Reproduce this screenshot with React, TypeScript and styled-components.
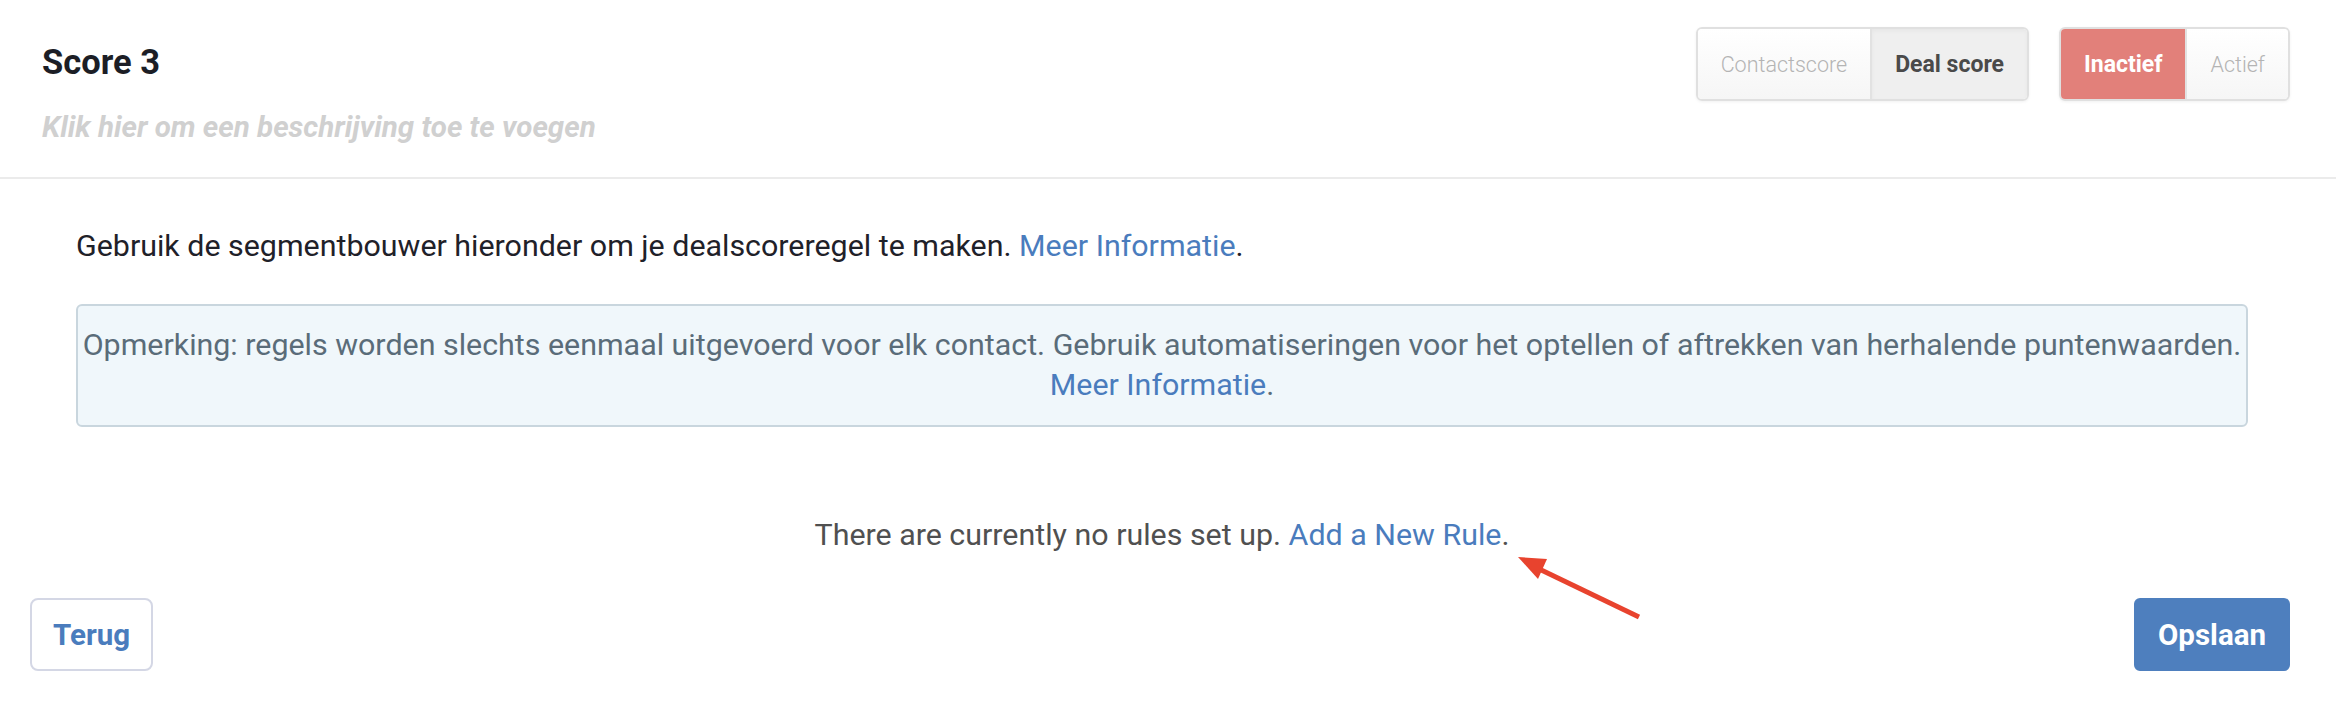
import React from "react";
import styled, { createGlobalStyle } from "styled-components";

const GlobalStyle = createGlobalStyle`
  html, body { margin: 0; padding: 0; background: #ffffff; }
  body {
    font-family: Roboto, "Noto Sans", "Liberation Sans", sans-serif;
    -webkit-font-smoothing: antialiased;
  }
  * { box-sizing: border-box; }
`;

const Page = styled.div`
  position: relative;
  width: 2336px;
  height: 720px;
  overflow: hidden;
  background: #ffffff;
`;

const Header = styled.header`
  display: flex;
  justify-content: space-between;
  align-items: flex-start;
  padding: 27px 46px 32px 42px;
  border-bottom: 2px solid #ebebeb;
`;

const TitleBlock = styled.div`
  display: flex;
  flex-direction: column;
  padding-top: 15px;
`;

const Title = styled.h1`
  margin: 0;
  font-size: 34.5px;
  line-height: 40px;
  font-weight: 700;
  color: #1c1e26;
`;

const Subtitle = styled.div`
  margin-top: 27px;
  font-size: 29.5px;
  line-height: 36px;
  font-weight: 700;
  font-style: italic;
  color: #d0d0d0;
`;

const Controls = styled.div`
  display: flex;
  gap: 30px;
`;

const ToggleGroup = styled.div`
  display: flex;
  height: 74px;
  border: 2px solid #e0e0e0;
  border-radius: 6px;
  overflow: hidden;
  box-shadow: 0 1px 3px rgba(0, 0, 0, 0.06);
`;

const ToggleButton = styled.button<{ $active?: boolean; $danger?: boolean }>`
  display: flex;
  align-items: center;
  justify-content: center;
  padding: 0 23px;
  border: none;
  border-left: 2px solid #e2e2e2;
  font-family: inherit;
  font-size: ${(p) => (p.$active ? "23px" : "21.5px")};
  font-weight: ${(p) => (p.$active ? 700 : 300)};
  color: ${(p) => (p.$active ? (p.$danger ? "#ffffff" : "#4a4a4a") : "#b4b4b4")};
  background: ${(p) =>
    p.$active
      ? p.$danger
        ? "#e2807a"
        : "#efefef"
      : "linear-gradient(#ffffff, #f6f6f6)"};
  box-shadow: ${(p) => (p.$active && !p.$danger ? "inset 0 2px 4px rgba(0,0,0,0.04)" : "none")};
  &:first-child { border-left: none; }
`;

const Content = styled.main`
  padding: 47px 88px 0 76px;
`;

const Intro = styled.p`
  margin: 0;
  font-size: 30.4px;
  line-height: 40px;
  color: #1f2129;
`;

const Link = styled.a`
  color: #4a7cbd;
  text-decoration: none;
`;

const Note = styled.div`
  margin-top: 38px;
  padding: 19px 0 20px;
  background: #f0f7fb;
  border: 2px solid #c9d6de;
  border-radius: 6px;
  text-align: center;
  font-size: 30.4px;
  line-height: 40px;
  color: #5a6c79;
`;

const NoteLine = styled.span`
  display: block;
  white-space: nowrap;
`;

const Empty = styled.p`
  margin: 88px 0 0;
  text-align: center;
  font-size: 30.4px;
  line-height: 40px;
  color: #505050;
`;

const Footer = styled.footer`
  display: flex;
  justify-content: space-between;
  padding: 43px 46px 0 30px;
`;

const Button = styled.button<{ $primary?: boolean }>`
  height: 73px;
  padding: 0 ${(p) => (p.$primary ? "22px" : "21px")};
  border-radius: ${(p) => (p.$primary ? "6px" : "8px")};
  border: 2px solid ${(p) => (p.$primary ? "#4e7fbe" : "#d4d7e5")};
  background: ${(p) => (p.$primary ? "#4e7fbe" : "#ffffff")};
  color: ${(p) => (p.$primary ? "#ffffff" : "#4a7cbd")};
  font-family: inherit;
  font-size: 29.5px;
  font-weight: 700;
`;

const Annotation = styled.svg`
  position: absolute;
  left: 1505px;
  top: 545px;
  width: 145px;
  height: 80px;
  overflow: visible;
`;

export default function App() {
  return (
    <Page>
      <GlobalStyle />
      <Header>
        <TitleBlock>
          <Title>Score 3</Title>
          <Subtitle>Klik hier om een beschrijving toe te voegen</Subtitle>
        </TitleBlock>
        <Controls>
          <ToggleGroup>
            <ToggleButton>Contactscore</ToggleButton>
            <ToggleButton $active>Deal score</ToggleButton>
          </ToggleGroup>
          <ToggleGroup>
            <ToggleButton $active $danger>Inactief</ToggleButton>
            <ToggleButton>Actief</ToggleButton>
          </ToggleGroup>
        </Controls>
      </Header>
      <Content>
        <Intro>
          Gebruik de segmentbouwer hieronder om je dealscoreregel te maken.{" "}
          <Link href="#">Meer Informatie</Link>.
        </Intro>
        <Note>
          <NoteLine>
            Opmerking: regels worden slechts eenmaal uitgevoerd voor elk contact. Gebruik automatiseringen voor het optellen of aftrekken van herhalende puntenwaarden.
          </NoteLine>
          <NoteLine>
            <Link href="#">Meer Informatie</Link>.
          </NoteLine>
        </Note>
        <Empty>
          There are currently no rules set up. <Link href="#">Add a New Rule</Link>.
        </Empty>
      </Content>
      <Footer>
        <Button>Terug</Button>
        <Button $primary>Opslaan</Button>
      </Footer>
      <Annotation viewBox="0 0 145 80">
        <line x1="134" y1="72" x2="30" y2="22" stroke="#e8432e" strokeWidth="5" />
        <polygon points="13,12 42,14 33,34" fill="#e8432e" />
      </Annotation>
    </Page>
  );
}
